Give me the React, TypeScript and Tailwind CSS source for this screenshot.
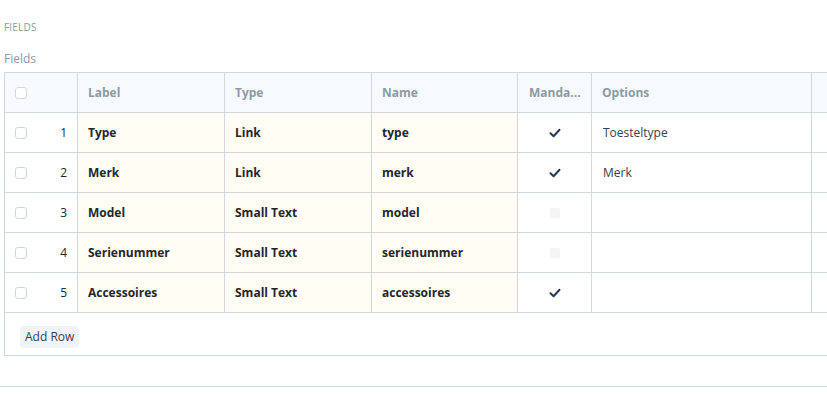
import React from "react";

type Field = {
  idx: number;
  label: string;
  type: string;
  name: string;
  mandatory: boolean;
  options: string;
};

const fields: Field[] = [
  { idx: 1, label: "Type", type: "Link", name: "type", mandatory: true, options: "Toesteltype" },
  { idx: 2, label: "Merk", type: "Link", name: "merk", mandatory: true, options: "Merk" },
  { idx: 3, label: "Model", type: "Small Text", name: "model", mandatory: false, options: "" },
  { idx: 4, label: "Serienummer", type: "Small Text", name: "serienummer", mandatory: false, options: "" },
  { idx: 5, label: "Accessoires", type: "Small Text", name: "accessoires", mandatory: true, options: "" },
];

const cols = "grid grid-cols-[73px_147px_147px_146px_74px_220px_60px]";

function Check() {
  return (
    <svg width="12" height="10" viewBox="0 0 12 10" fill="none">
      <path d="M1.5 5.2 L4.6 8.2 L10.5 1.8" stroke="#1f3a5a" strokeWidth="2" strokeLinecap="round" strokeLinejoin="round" />
    </svg>
  );
}

function Box() {
  return <span className="block w-3 h-3 rounded-[3px] border border-[#d1d8dd] bg-white" />;
}

export default function App() {
  return (
    <div className="w-[827px] h-[399px] overflow-hidden bg-white font-['Open_Sans',sans-serif] text-[#1f272e]">
      <div className="pt-[20px] pl-1 text-[10px] leading-[14px] text-[#8d99a6] tracking-[0.2px]">FIELDS</div>
      <div className="pt-[17px] pl-1 text-[12px] leading-[16px] text-[#8d99a6]">Fields</div>

      <div className="ml-1 mt-[5px] w-[870px] border-l border-t border-[#d1d8dd]">
        <div className={`${cols} h-10 bg-[#f7fafc] border-b border-[#d1d8dd] text-[12px] font-bold text-[#8d99a6]`}>
          <div className="border-r border-[#d1d8dd] flex items-center pl-[10px]">
            <Box />
          </div>
          <div className="border-r border-[#d1d8dd] flex items-center pl-[10px]">Label</div>
          <div className="border-r border-[#d1d8dd] flex items-center pl-[10px]">Type</div>
          <div className="border-r border-[#d1d8dd] flex items-center pl-[10px]">Name</div>
          <div className="border-r border-[#d1d8dd] flex items-center pl-[11px]">Manda...</div>
          <div className="border-r border-[#d1d8dd] flex items-center pl-[10px]">Options</div>
          <div></div>
        </div>

        {fields.map((f) => (
          <div key={f.idx} className={`${cols} h-10 border-b border-[#d1d8dd] text-[12px]`}>
            <div className="border-r border-[#d1d8dd] flex items-center justify-between pl-[10px] pr-[10px] text-[#1f272e]">
              <Box />
              <span>{f.idx}</span>
            </div>
            <div className="border-r border-[#d1d8dd] bg-[#fffdf4] flex items-center pl-[10px] font-bold">{f.label}</div>
            <div className="border-r border-[#d1d8dd] bg-[#fffdf4] flex items-center pl-[10px] font-bold">{f.type}</div>
            <div className="border-r border-[#d1d8dd] bg-[#fffdf4] flex items-center pl-[10px] font-bold">{f.name}</div>
            <div className="border-r border-[#d1d8dd] flex items-center justify-center">
              {f.mandatory ? <Check /> : <span className="block w-[10px] h-[10px] rounded-[2px] bg-[#f4f5f7]" />}
            </div>
            <div className="border-r border-[#d1d8dd] flex items-center pl-[11px] text-[#36414c]">{f.options}</div>
            <div></div>
          </div>
        ))}

        <div className="h-[43px] border-b border-[#d1d8dd] pt-[10px] pl-[15px]">
          <button className="h-[22px] px-[5px] rounded-[4px] bg-[#f0f4f7] text-[12px] leading-[22px] text-[#36414c]">
            Add Row
          </button>
        </div>
      </div>

      <div className="mt-[30px] border-t border-[#d1d8dd]" />
    </div>
  );
}
